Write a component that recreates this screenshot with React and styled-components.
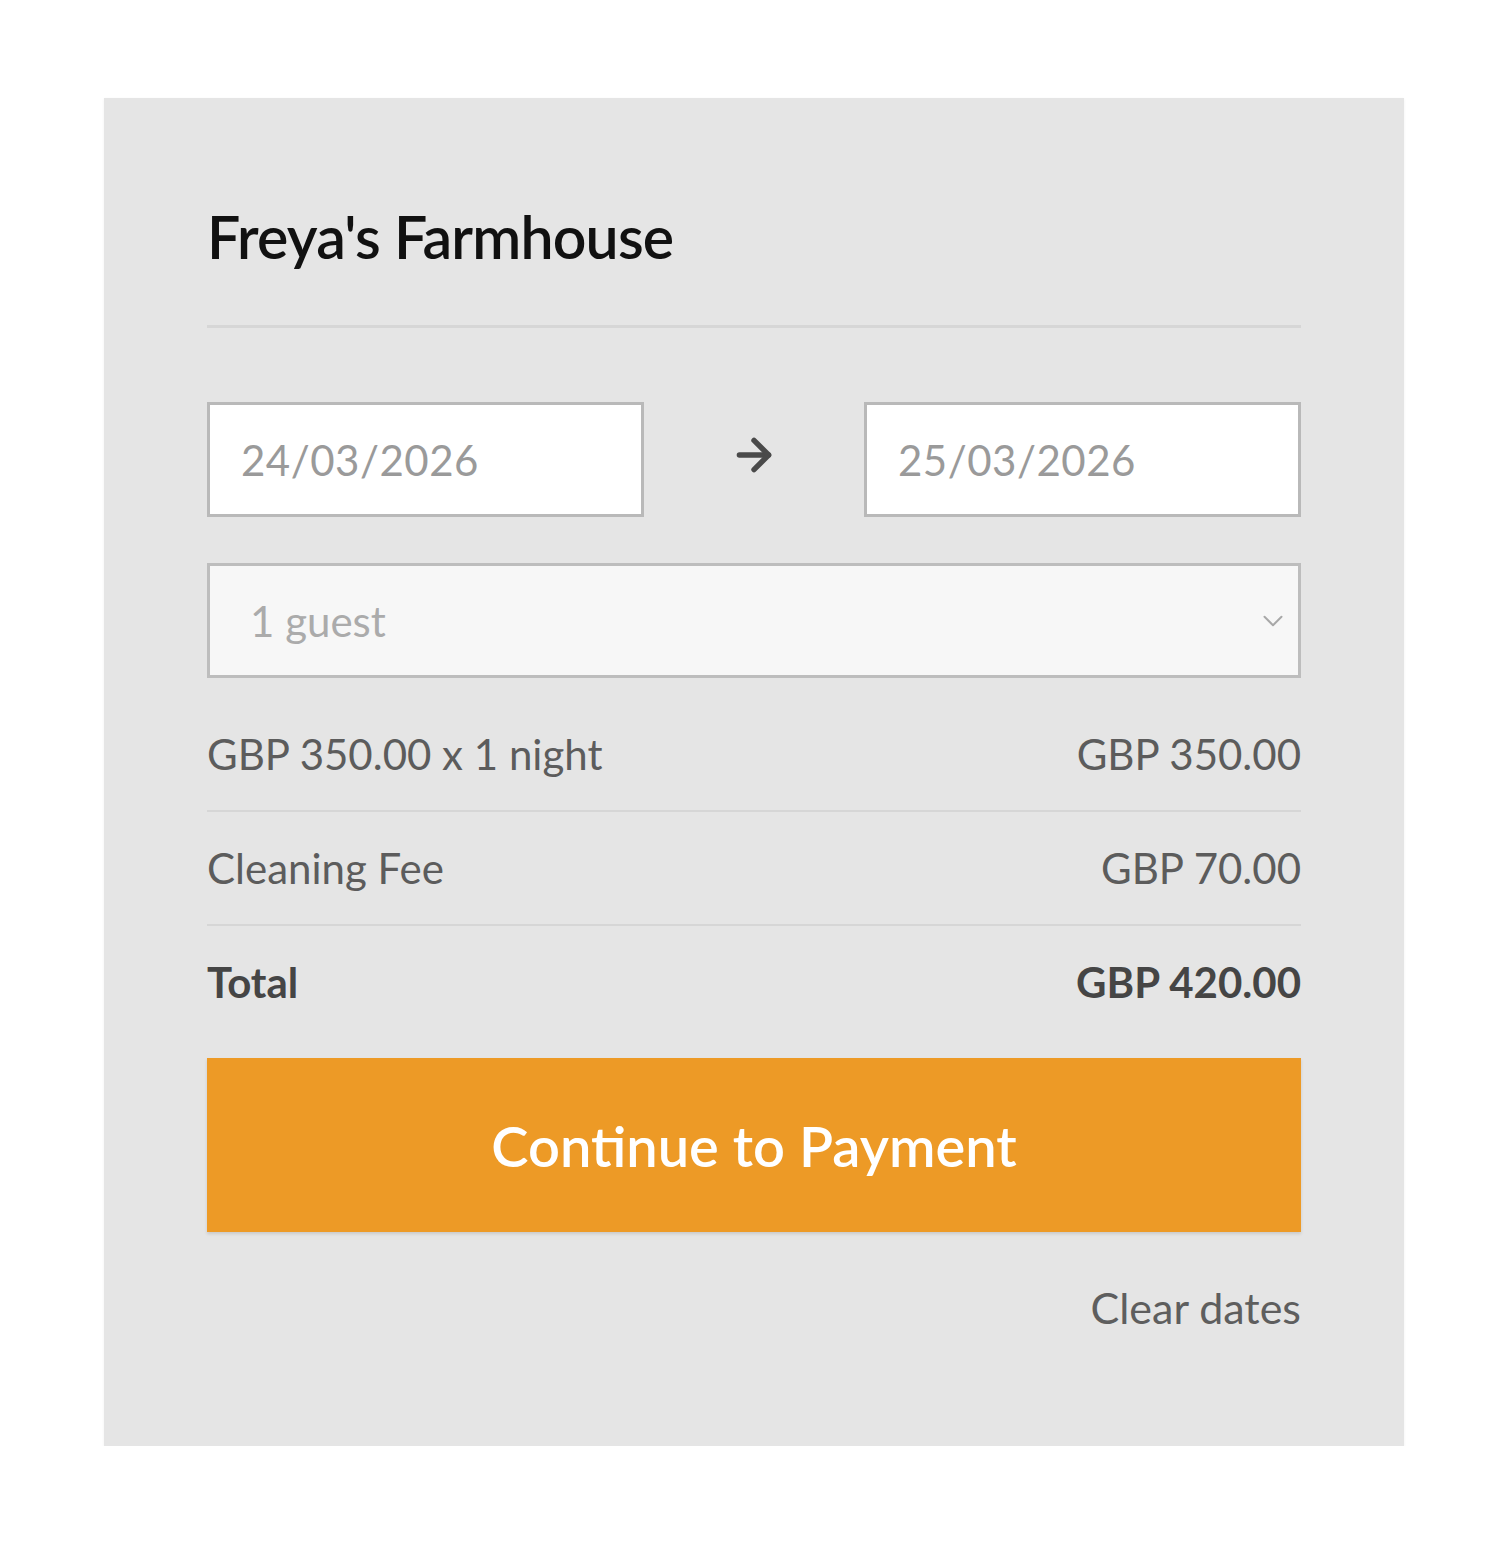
import React, { useState } from "react";
import styled, { createGlobalStyle } from "styled-components";
import { ArrowRight, ChevronDown } from "lucide-react";

const GlobalStyle = createGlobalStyle`
  body {
    margin: 0;
    background: #ffffff;
    font-family: "Lato", "Open Sans", sans-serif;
  }
`;

const BookingCard = styled.div`
  width: 1300px;
  box-sizing: border-box;
  margin: 98px 0 0 104px;
  padding: 103px 103px 113px;
  background-color: #e5e5e5;
  box-shadow: 0 1px 3px rgba(0, 0, 0, 0.06);
`;

const Title = styled.h2`
  margin: 0;
  font-size: 59px;
  line-height: 72px;
  font-weight: 600;
  letter-spacing: -0.8px;
  color: #111;
`;

const Divider = styled.div`
  height: ${({ thick }) => (thick ? "3px" : "2px")};
  background-color: #d6d6d6;
  margin: ${({ margin }) => margin || "0"};
`;

const DatesRow = styled.div`
  display: grid;
  grid-template-columns: 1fr 220px 1fr;
  align-items: center;
`;

const DateInput = styled.div`
  height: 115px;
  box-sizing: border-box;
  border: 3px solid #b9b9b9;
  background: #ffffff;
  display: flex;
  align-items: center;
  padding-left: 31px;
  font-size: 42px;
  color: #9a9a9a;
  letter-spacing: 0.5px;
`;

const ArrowWrap = styled.div`
  display: flex;
  justify-content: center;
  color: #4a4a4a;
  margin-top: -10px;
`;

const GuestSelect = styled.div`
  margin: 46px 0 20px;
  height: 115px;
  box-sizing: border-box;
  border: 3px solid #bdbdbd;
  background: #f7f7f7;
  display: flex;
  align-items: center;
  justify-content: space-between;
  padding: 0 8px 0 40px;
  font-size: 42px;
  color: #ababab;
`;

const ChevronWrap = styled.div`
  display: flex;
  color: #a8a8a8;
`;

const PriceRow = styled.div`
  display: flex;
  justify-content: space-between;
  align-items: center;
  height: 112px;
  font-size: 42px;
  color: ${({ bold }) => (bold ? "#454545" : "#5c5c5c")};
  font-weight: ${({ bold }) => (bold ? 700 : 400)};
`;

const PayButton = styled.button`
  display: block;
  width: 100%;
  height: 174px;
  margin-top: 20px;
  border: none;
  background-color: #ed9a26;
  color: #ffffff;
  font-family: "Lato", sans-serif;
  font-size: 56px;
  font-weight: 600;
  box-shadow: 0 2px 3px rgba(0, 0, 0, 0.12);
  cursor: pointer;
`;

const ClearLink = styled.div`
  margin-top: 50px;
  text-align: right;
  font-size: 43px;
  color: #5e5e5e;
`;

const lines = [
  { label: "GBP 350.00 x 1 night", amount: "GBP 350.00" },
  { label: "Cleaning Fee", amount: "GBP 70.00" },
];

const App = () => {
  const [guests] = useState(1);

  return (
    <>
      <GlobalStyle />
      <BookingCard>
        <Title>Freya's Farmhouse</Title>
        <Divider thick margin="52px 0 74px" />
        <DatesRow>
          <DateInput>24/03/2026</DateInput>
          <ArrowWrap>
            <ArrowRight size={50} strokeWidth={2.6} />
          </ArrowWrap>
          <DateInput>25/03/2026</DateInput>
        </DatesRow>
        <GuestSelect>
          <span>{guests} guest</span>
          <ChevronWrap>
            <ChevronDown size={34} strokeWidth={1.4} />
          </ChevronWrap>
        </GuestSelect>
        {lines.map((line) => (
          <React.Fragment key={line.label}>
            <PriceRow>
              <span>{line.label}</span>
              <span>{line.amount}</span>
            </PriceRow>
            <Divider />
          </React.Fragment>
        ))}
        <PriceRow bold>
          <span>Total</span>
          <span>GBP 420.00</span>
        </PriceRow>
        <PayButton>Continue to Payment</PayButton>
        <ClearLink>Clear dates</ClearLink>
      </BookingCard>
    </>
  );
};

export default App;
